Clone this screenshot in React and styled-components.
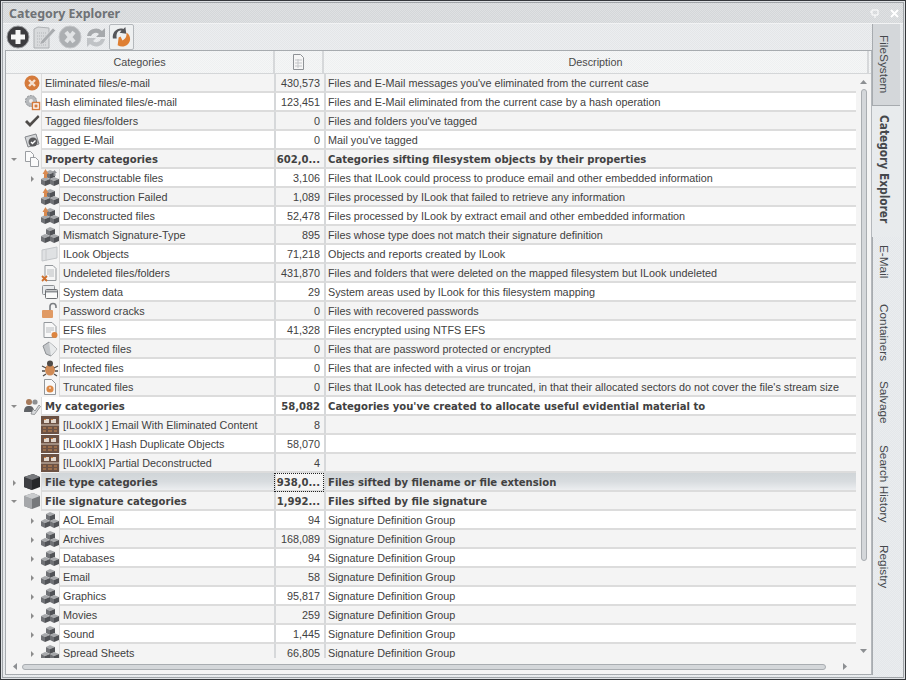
import React from "react";
import styled, { createGlobalStyle } from "styled-components";

const GlobalStyle = createGlobalStyle`
  html, body { margin: 0; padding: 0; background: #2f3236; }
  body { font-family: "Liberation Sans", sans-serif; }
  * { box-sizing: border-box; }
`;

const Window = styled.div`
  width: 906px;
  height: 680px;
  display: flex;
  overflow: hidden;
  padding: 1px;
  border: 1px solid #34373b;
  background: #dfe2e5;
`;

const Frame = styled.div`
  flex: 1;
  min-width: 0;
  display: flex;
  flex-direction: column;
  border: 1px solid #a0a4a8;
  padding: 0 0 2px 2px;
  background: repeating-conic-gradient(#e4e7ea 0 25%, #eaedef 0 50%) 0 0 / 2px 2px;
`;

const TitleBar = styled.div`
  height: 21px;
  flex: none;
  margin-left: -2px;
  display: flex;
  align-items: center;
  justify-content: space-between;
  padding: 0 4px 0 6px;
  background: repeating-conic-gradient(#d4d7d9 0 25%, #dfe1e3 0 50%) 0 0 / 2px 2px;
  border-bottom: 1px solid #f2f3f4;
`;

const Title = styled.div`
  font: bold 12.4px "Noto Sans", sans-serif;
  color: #6f7276;
`;

const TitleButtons = styled.div`
  display: flex;
  gap: 11px;
  align-items: center;
`;

const Body = styled.div`
  flex: 1;
  min-height: 0;
  display: flex;
`;

const Main = styled.div`
  width: 867px;
  flex: none;
  display: flex;
  flex-direction: column;
`;

const Toolbar = styled.div`
  height: 27px;
  flex: none;
  display: flex;
  align-items: center;
  gap: 1px;
  background: repeating-conic-gradient(#e4e6e8 0 25%, #eceef0 0 50%) 0 0 / 2px 2px;
  border-bottom: 1px solid #a7abaf;
`;

const ToolButton = styled.div`
  width: 25px;
  height: 26px;
  flex: none;
  display: flex;
  align-items: center;
  justify-content: center;
  border-radius: 2px;
  border: ${(p) => (p.$active ? "1px solid #b4b8bc" : "none")};
  background: ${(p) => (p.$active ? "#eef0f1" : "transparent")};
`;

const Grid = styled.div`
  flex: 1;
  min-height: 0;
  display: flex;
  flex-direction: column;
  background: #f4f4f4;
  border-left: 1px solid #a7abaf;
  border-right: 1px solid #b4b8bc;
  border-bottom: 1px solid #a7abaf;
`;

const HeaderRow = styled.div`
  height: 23px;
  flex: none;
  display: flex;
  padding-right: 2px;
  background: repeating-conic-gradient(#eef0f1 0 25%, #f5f6f6 0 50%) 0 0 / 2px 2px;
  border-bottom: 1px solid #d4d6d8;
`;

const HeaderCell = styled.div`
  width: ${(p) => p.$width}px;
  flex: ${(p) => (p.$grow ? 1 : "none")};
  display: flex;
  align-items: center;
  justify-content: center;
  font-size: 10.8px;
  color: #4a4a4a;
  border-right: 2px solid #d6d8da;
`;

const GridBody = styled.div`
  flex: 1;
  min-height: 0;
  display: flex;
`;

const RowsClip = styled.div`
  width: 850px;
  flex: none;
  overflow: hidden;
  height: 584px;
`;

const Row = styled.div`
  height: 19px;
  display: flex;
`;

const Gutter = styled.div`
  width: ${(p) => (p.$depth ? 35 : 17)}px;
  flex: none;
  display: flex;
  align-items: center;
  justify-content: flex-end;
  padding-right: 2px;
  background: #f4f4f4;
`;

const Arrow = styled.span`
  width: 0;
  height: 0;
  flex: none;
  margin-right: 5px;
  ${(p) =>
    p.$open
      ? `border-left: 3px solid transparent; border-right: 3px solid transparent; border-top: 3px solid #8c8c8c; margin-right: 4px;`
      : `border-top: 3px solid transparent; border-bottom: 3px solid transparent; border-left: 3px solid #8c8c8c;`}
`;

const IconSlot = styled.div`
  width: 18px;
  height: 18px;
  flex: none;
  display: flex;
  align-items: center;
  justify-content: center;
  background: #f4f4f4;
`;

const Cell = styled.div`
  height: 19px;
  display: flex;
  align-items: center;
  white-space: nowrap;
  overflow: hidden;
  color: #414141;
  font-size: ${(p) => (p.$bold ? "11.2px" : "10.8px")};
  font-weight: ${(p) => (p.$bold ? 700 : 400)};
  font-family: ${(p) =>
    p.$bold ? '"DejaVu Sans Condensed", "DejaVu Sans", sans-serif' : '"Liberation Sans", sans-serif'};
  padding-top: ${(p) => (p.$bold ? "1px" : "0")};
  background: ${(p) =>
    p.$selected
      ? "linear-gradient(#d0d5d8, #d8dcdf 50%, #eceef0)"
      : p.$odd
      ? "#f4f4f4"
      : "#ffffff"};
  border-bottom: 2px solid #dcdcdc;
`;

const NameCell = styled(Cell)`
  flex: 1;
  min-width: 0;
  padding-left: 3px;
  border-left: 1px solid #dcdcdc;
`;

const CountCell = styled(Cell)`
  width: 50px;
  flex: none;
  justify-content: flex-end;
  padding-right: 4px;
  border-left: 2px solid #d6d8da;
  ${(p) =>
    p.$focus &&
    `outline: 1px dotted #222; outline-offset: -1px; background: #f4f4f4;`}
`;

const DescCell = styled(Cell)`
  width: 532px;
  flex: none;
  padding-left: 2px;
  border-left: 2px solid #d6d8da;
`;

const NameColumn = styled.div`
  width: 268px;
  flex: none;
  display: flex;
`;

const VScroll = styled.div`
  width: 15px;
  flex: none;
  display: flex;
  flex-direction: column;
  align-items: center;
  padding: 6px 0 6px;
`;

const ScrollThumb = styled.div`
  width: 6px;
  height: 472px;
  margin-top: 5px;
  background: #d4d7da;
  border: 1px solid #a9adb1;
  border-radius: 3px;
`;

const ScrollSpacer = styled.div`
  flex: 1;
`;

const HScroll = styled.div`
  height: 15px;
  flex: none;
  display: flex;
  align-items: center;
  padding-left: 7px;
`;

const HThumb = styled.div`
  width: 804px;
  height: 6px;
  margin: 0 17px 0 5px;
  background: #d4d7da;
  border: 1px solid #a9adb1;
  border-radius: 3px;
`;

const TabRail = styled.div`
  flex: 1;
  display: flex;
  flex-direction: column;
  border-left: 1px solid #a7abaf;
`;

const Tab = styled.div`
  height: ${(p) => p.$height}px;
  flex: none;
  writing-mode: vertical-rl;
  white-space: nowrap;
  display: flex;
  align-items: center;
  padding-top: ${(p) => p.$pad}px;
  padding-right: ${(p) => (p.$shaded ? "5px" : "8px")};
  font-size: 11.8px;
  font-weight: ${(p) => (p.$active ? 700 : 400)};
  font-family: ${(p) =>
    p.$active ? '"DejaVu Sans Condensed", "DejaVu Sans", sans-serif' : '"Liberation Sans", sans-serif'};
  color: #45484c;
  margin-left: ${(p) => (p.$active ? "-1px" : "0")};
  margin-right: ${(p) => (p.$shaded ? "3px" : "0")};
  background: ${(p) => (p.$active ? "#e8ebed" : p.$shaded ? "#d4d7da" : "transparent")};
  border-bottom: ${(p) => (p.$shaded ? "1px solid #a7abaf" : "none")};
`;

const Cube = ({ x, y }) => (
  <g transform={`translate(${x} ${y})`}>
    <path d="M0 2l4-2 5 2-5 2z" fill="#a6a8ab" />
    <path d="M0 2l4 2v5L0 7z" fill="#6f7175" />
    <path d="M9 2L4 4v5l5-2z" fill="#505256" />
  </g>
);

const Cubes = ({ arrow, extra }) => (
  <svg width="18" height="18" viewBox="0 0 18 18">
    <Cube x={5} y={1} />
    <Cube x={0} y={8} />
    <Cube x={9} y={8} />
    {arrow && <path d="M1.500 5L4.500 0 7.500 5H6v4H3V5z" fill="#d98a50" />}
    {extra && <path d="M11 4l2.500-3L16 4h-1.500v3h-2V4z" fill="#8f9195" />}
  </svg>
);

const icons = {
  eliminated: (
    <svg width="18" height="18" viewBox="0 0 18 18">
      <circle cx="9" cy="9" r="7.5" fill="#d57b3c" />
      <path d="M6 6l6 6M12 6l-6 6" stroke="#f5e2d3" strokeWidth="2.4" />
    </svg>
  ),
  hash: (
    <svg width="18" height="18" viewBox="0 0 18 18">
      <circle cx="8" cy="8" r="5.5" fill="#b5b8bb" stroke="#8b8e92" strokeDasharray="2 1" />
      <circle cx="8" cy="8" r="2" fill="#eee" />
      <rect x="9.500" y="9.500" width="7" height="7" fill="#fff" stroke="#d57b3c" strokeWidth="1.4" />
      <rect x="11.500" y="11.500" width="3" height="3" fill="#d57b3c" />
    </svg>
  ),
  check: (
    <svg width="18" height="18" viewBox="0 0 18 18">
      <path d="M2 10l2-2 3 3 8-8 1.500 2L7 15z" fill="#4f4c4a" />
    </svg>
  ),
  tagMail: (
    <svg width="18" height="18" viewBox="0 0 18 18">
      <path d="M2 6l11-3 3 10-11 3z" fill="#d5d7d9" stroke="#85888c" />
      <circle cx="10" cy="11" r="4.500" fill="#58595b" />
      <path d="M8 11l1.500 1.500 3-3" stroke="#fff" strokeWidth="1.4" fill="none" />
    </svg>
  ),
  page: (
    <svg width="18" height="18" viewBox="0 0 18 18">
      <path d="M2.500 1.500h5l3 3v7h-8z" fill="#fbfbfb" stroke="#9a9da1" />
      <path d="M7.500 7.500h5l3 3v6h-8z" fill="#fbfbfb" stroke="#9a9da1" />
    </svg>
  ),
  cubes: <Cubes />,
  cubesArrow: <Cubes arrow />,
  cubesBoth: <Cubes arrow extra />,
  book: (
    <svg width="18" height="18" viewBox="0 0 18 18">
      <path d="M1 5l15-3v11L1 16z" fill="#dfe1e3" stroke="#c3c6c9" />
      <path d="M5 4v12" stroke="#c8cacc" />
    </svg>
  ),
  undeleted: (
    <svg width="18" height="18" viewBox="0 0 18 18">
      <path d="M4 1.500h8l3 3v12H4z" fill="#f6f6f6" stroke="#94989c" />
      <path d="M6 6h7M6 8h7M6 10h7M8 12h5" stroke="#b9bcbf" />
      <path d="M1 12l5 5M6 12l-5 5" stroke="#cf6f2c" strokeWidth="1.8" />
    </svg>
  ),
  system: (
    <svg width="18" height="18" viewBox="0 0 18 18">
      <rect x="1.500" y="2.500" width="12" height="9" rx="1" fill="#e8eaec" stroke="#8f9296" />
      <rect x="4.500" y="6.500" width="12" height="9" rx="1" fill="#fafafa" stroke="#6c6f73" />
      <path d="M5 8.500h11" stroke="#8f9296" strokeWidth="2" />
    </svg>
  ),
  lock: (
    <svg width="18" height="18" viewBox="0 0 18 18">
      <path d="M9 8V4.500a3 3 0 0 1 6 0V6" fill="none" stroke="#7b7e82" strokeWidth="1.6" />
      <rect x="1" y="8" width="11" height="8" rx="1" fill="#e09a64" />
    </svg>
  ),
  efs: (
    <svg width="18" height="18" viewBox="0 0 18 18">
      <path d="M3 1.500h8l4 4v11H3z" fill="#f8f8f8" stroke="#93979b" />
      <path d="M5 7h8M5 9h8M5 11h5" stroke="#b9bcbf" />
      <circle cx="13.500" cy="14" r="3" fill="#dd8540" />
    </svg>
  ),
  shield: (
    <svg width="18" height="18" viewBox="0 0 18 18">
      <path d="M2 6l6-4 8 7-6 7-5-2z" fill="#c3c6c9" stroke="#8c8f93" />
      <path d="M8 2l8 7-6 7z" fill="#e8eaeb" />
    </svg>
  ),
  bug: (
    <svg width="18" height="18" viewBox="0 0 18 18">
      <ellipse cx="9" cy="11" rx="5" ry="5.500" fill="#cf8a55" />
      <circle cx="9" cy="4.500" r="3" fill="#4f4a46" />
      <path d="M1 7l4 2M17 7l-4 2M1 12h3M17 12h-3M2 17l3-2M16 17l-3-2" stroke="#4f4a46" strokeWidth="1.3" />
    </svg>
  ),
  truncated: (
    <svg width="18" height="18" viewBox="0 0 18 18">
      <path d="M3.500 1.500h7l4 4v11h-11z" fill="#f8f8f8" stroke="#93979b" />
      <circle cx="9" cy="11" r="3.600" fill="#dc8947" />
      <path d="M9 9v2" stroke="#fff" />
    </svg>
  ),
  people: (
    <svg width="18" height="18" viewBox="0 0 18 18">
      <circle cx="6" cy="5" r="3" fill="#a67a5b" />
      <path d="M1 15c0-5 2-6 5-6s5 1 5 6z" fill="#5f6266" />
      <circle cx="12" cy="5" r="2.600" fill="#8d8f92" />
      <path d="M8 17l2-5 2 2 4-6 1.500 1.500-6 8z" fill="#d7d9db" stroke="#76797d" strokeWidth=".7" />
    </svg>
  ),
  film: (
    <svg width="18" height="18" viewBox="0 0 18 18">
      <rect width="18" height="18" fill="#6c5244" />
      <path d="M3 3h5v4H3zM10 3h5v4h-5z" fill="#e2d7cd" />
      <path d="M3 3h2v1H3zM10 3h2v1h-2z" fill="#d9853f" />
      <path d="M0 9h18" stroke="#d8c9bb" />
      <path d="M2 12h3M7 12h4M13 12h3M2 15h3M7 15h4M13 15h3" stroke="#c98a55" />
    </svg>
  ),
  cubeDark: (
    <svg width="18" height="18" viewBox="0 0 18 18">
      <path d="M1 4l9-3 7 3v10l-8 3-8-3z" fill="#26272a" />
      <path d="M1 4l8 3v10l-8-3z" fill="#3d3e42" />
      <path d="M1 4l9-3 7 3-8 3z" fill="#77797d" />
    </svg>
  ),
  cubeGray: (
    <svg width="18" height="18" viewBox="0 0 18 18">
      <path d="M1 4l9-3 7 3v10l-8 3-8-3z" fill="#77797c" />
      <path d="M1 4l8 3v10l-8-3z" fill="#a5a7aa" />
      <path d="M1 4l9-3 7 3-8 3z" fill="#c9cbcd" />
    </svg>
  ),
};

const rows = [
  { icon: "eliminated", name: "Eliminated files/e-mail", count: "430,573", desc: "Files and E-Mail messages you've eliminated from the current case" },
  { icon: "hash", name: "Hash eliminated files/e-mail", count: "123,451", desc: "Files and E-Mail eliminated from the current case by a hash operation" },
  { icon: "check", name: "Tagged files/folders", count: "0", desc: "Files and folders you've tagged" },
  { icon: "tagMail", name: "Tagged E-Mail", count: "0", desc: "Mail you've tagged" },
  { icon: "page", name: "Property categories", count: "602,0...", desc: "Categories sifting filesystem objects by their properties", bold: true, arrow: "open" },
  { icon: "cubesBoth", depth: 1, name: "Deconstructable files", count: "3,106", desc: "Files that ILook could process to produce email and other embedded information", arrow: "closed" },
  { icon: "cubesArrow", depth: 1, name: "Deconstruction Failed", count: "1,089", desc: "Files processed by ILook that failed to retrieve any information" },
  { icon: "cubesArrow", depth: 1, name: "Deconstructed files", count: "52,478", desc: "Files processed by ILook by extract email and other embedded information" },
  { icon: "cubes", depth: 1, name: "Mismatch Signature-Type", count: "895", desc: "Files whose type does not match their signature definition" },
  { icon: "book", depth: 1, name: "ILook Objects", count: "71,218", desc: "Objects and reports created by ILook" },
  { icon: "undeleted", depth: 1, name: "Undeleted files/folders", count: "431,870", desc: "Files and folders that were deleted on the mapped filesystem but ILook undeleted" },
  { icon: "system", depth: 1, name: "System data", count: "29", desc: "System areas used by ILook for this filesystem mapping" },
  { icon: "lock", depth: 1, name: "Password cracks", count: "0", desc: "Files with recovered passwords" },
  { icon: "efs", depth: 1, name: "EFS files", count: "41,328", desc: "Files encrypted using NTFS EFS" },
  { icon: "shield", depth: 1, name: "Protected files", count: "0", desc: "Files that are password protected or encrypted" },
  { icon: "bug", depth: 1, name: "Infected files", count: "0", desc: "Files that are infected with a virus or trojan" },
  { icon: "truncated", depth: 1, name: "Truncated files", count: "0", desc: "Files that ILook has detected are truncated, in that their allocated sectors do not cover the file's stream size" },
  { icon: "people", name: "My categories", count: "58,082", desc: "Categories you've created to allocate useful evidential material to", bold: true, arrow: "open" },
  { icon: "film", depth: 1, name: "[ILookIX ] Email With Eliminated Content", count: "8", desc: "" },
  { icon: "film", depth: 1, name: "[ILookIX ] Hash Duplicate Objects", count: "58,070", desc: "" },
  { icon: "film", depth: 1, name: "[ILookIX] Partial Deconstructed", count: "4", desc: "" },
  { icon: "cubeDark", name: "File type categories", count: "938,0...", desc: "Files sifted by filename or file extension", bold: true, arrow: "closed", selected: true },
  { icon: "cubeGray", name: "File signature categories", count: "1,992...", desc: "Files sifted by file signature", bold: true, arrow: "open" },
  { icon: "cubes", depth: 1, name: "AOL Email", count: "94", desc: "Signature Definition Group", arrow: "closed" },
  { icon: "cubes", depth: 1, name: "Archives", count: "168,089", desc: "Signature Definition Group", arrow: "closed" },
  { icon: "cubes", depth: 1, name: "Databases", count: "94", desc: "Signature Definition Group", arrow: "closed" },
  { icon: "cubes", depth: 1, name: "Email", count: "58", desc: "Signature Definition Group", arrow: "closed" },
  { icon: "cubes", depth: 1, name: "Graphics", count: "95,817", desc: "Signature Definition Group", arrow: "closed" },
  { icon: "cubes", depth: 1, name: "Movies", count: "259", desc: "Signature Definition Group", arrow: "closed" },
  { icon: "cubes", depth: 1, name: "Sound", count: "1,445", desc: "Signature Definition Group", arrow: "closed" },
  { icon: "cubes", depth: 1, name: "Spread Sheets", count: "66,805", desc: "Signature Definition Group", arrow: "closed" },
];

const tabs = [
  { label: "FileSystem", height: 82, pad: 11, shaded: true },
  { label: "Category Explorer", height: 131, pad: 9, active: true },
  { label: "E-Mail", height: 53, pad: 8 },
  { label: "Containers", height: 82, pad: 14 },
  { label: "Salvage", height: 62, pad: 9 },
  { label: "Search History", height: 100, pad: 11 },
  { label: "Registry", height: 64, pad: 11 },
];

function GridRow({ row, index }) {
  const odd = index % 2 === 0;
  return (
    <Row>
      <NameColumn>
        <Gutter $depth={row.depth}>
          {row.arrow && <Arrow $open={row.arrow === "open"} />}
        </Gutter>
        <IconSlot>{icons[row.icon]}</IconSlot>
        <NameCell $odd={odd} $bold={row.bold} $selected={row.selected}>{row.name}</NameCell>
      </NameColumn>
      <CountCell $odd={odd} $bold={row.bold} $selected={row.selected} $focus={row.selected}>{row.count}</CountCell>
      <DescCell $odd={odd} $bold={row.bold} $selected={row.selected}>{row.desc}</DescCell>
    </Row>
  );
}

export default function App() {
  return (
    <>
      <GlobalStyle />
      <Window>
        <Frame>
          <TitleBar>
            <Title>Category Explorer</Title>
            <TitleButtons>
              <svg width="9" height="9" viewBox="0 0 9 9">
                <path d="M2 1v5h6V1zM0 3h2M5 6v3" stroke="#fff" fill="none" />
              </svg>
              <svg width="9" height="9" viewBox="0 0 9 9">
                <path d="M1 1l7 7M8 1L1 8" stroke="#fff" strokeWidth="2" />
              </svg>
            </TitleButtons>
          </TitleBar>
          <Body>
            <Main>
              <Toolbar>
                <ToolButton>
                  <svg width="24" height="24" viewBox="0 0 24 24">
                    <circle cx="12" cy="12" r="11" fill="#3c3c3f" stroke="#9a9ca0" strokeWidth="1" />
                    <path d="M12 5v14M5 12h14" stroke="#f6f6f6" strokeWidth="5" />
                  </svg>
                </ToolButton>
                <ToolButton>
                  <svg width="24" height="24" viewBox="0 0 24 24">
                    <path d="M2 4l4-2 11 1v20H2z" fill="#d8dadc" stroke="#aeb1b4" />
                    <path d="M5 8h9M5 11h9M5 14h9M5 17h9M5 20h9" stroke="#b2b5b8" strokeDasharray="1 1" />
                    <path d="M9 16L21 3l2.500 2.500-12 13-4 1z" fill="#a9acaf" stroke="#e9eaeb" strokeWidth=".6" />
                  </svg>
                </ToolButton>
                <ToolButton>
                  <svg width="24" height="24" viewBox="0 0 24 24">
                    <circle cx="12" cy="12" r="11" fill="#acafb2" stroke="#c4c6c9" />
                    <path d="M8 7l8 10M16 7l-8 10" stroke="#e1e3e5" strokeWidth="4" />
                  </svg>
                </ToolButton>
                <ToolButton>
                  <svg width="24" height="24" viewBox="0 0 24 24">
                    <path d="M3 11a9 9 0 0 1 15-5l3-3v9h-9l3-3a5 5 0 0 0-8 2z" fill="#a6a9ac" />
                    <path d="M21 14a9 9 0 0 1-15 5l-3 3v-9h9l-3 3a5 5 0 0 0 8-2z" fill="#c0c3c6" />
                  </svg>
                </ToolButton>
                <ToolButton $active>
                  <svg width="23" height="23" viewBox="0 0 24 24">
                    <path d="M3 13C2 6 8 1 14 3l2-2 1 7-7-1 2-2c-3-1-6 2-5 8z" fill="#55565a" />
                    <path d="M8 20c5 3 12 1 13-6 0-3-1-6-4-7 1 5-2 7-4 8l-2-4-2 1z" fill="#de7f33" />
                  </svg>
                </ToolButton>
              </Toolbar>
              <Grid>
                <HeaderRow>
                  <HeaderCell $width={269}>Categories</HeaderCell>
                  <HeaderCell $width={49}>
                    <svg width="13" height="16" viewBox="0 0 13 16">
                      <path d="M1.500.5h7l3 3v12h-10z" fill="#f6f6f6" stroke="#8e9296" />
                      <path d="M3 6h7M3 9h7M3 12h7M6 5v9" stroke="#c4c6c9" />
                    </svg>
                  </HeaderCell>
                  <HeaderCell $grow>Description</HeaderCell>
                </HeaderRow>
                <GridBody>
                  <RowsClip>
                    {rows.map((row, i) => (
                      <GridRow key={row.name} row={row} index={i} />
                    ))}
                  </RowsClip>
                  <VScroll>
                    <svg width="7" height="4" viewBox="0 0 7 4"><path d="M3.500 0L7 4H0z" fill="#8c8f92" /></svg>
                    <ScrollThumb />
                    <ScrollSpacer />
                    <svg width="7" height="4" viewBox="0 0 7 4"><path d="M0 0h7L3.500 4z" fill="#8c8f92" /></svg>
                  </VScroll>
                </GridBody>
                <HScroll>
                  <svg width="4" height="7" viewBox="0 0 4 7"><path d="M4 0v7L0 3.500z" fill="#8c8f92" /></svg>
                  <HThumb />
                  <svg width="4" height="7" viewBox="0 0 4 7"><path d="M0 0v7l4-3.500z" fill="#8c8f92" /></svg>
                </HScroll>
              </Grid>
            </Main>
            <TabRail>
              {tabs.map((t) => (
                <Tab key={t.label} $height={t.height} $pad={t.pad} $active={t.active} $shaded={t.shaded}>
                  {t.label}
                </Tab>
              ))}
            </TabRail>
          </Body>
        </Frame>
      </Window>
    </>
  );
}
